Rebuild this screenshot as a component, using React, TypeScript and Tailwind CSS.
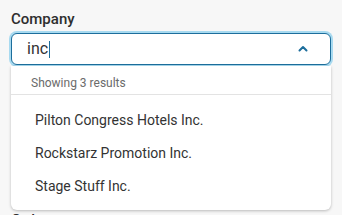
export default function App() {
  const results = ['Pilton Congress Hotels Inc.', 'Rockstarz Promotion Inc.', 'Stage Stuff Inc.']

  return (
    <div
      className="w-[342px] h-[215px] overflow-hidden bg-[#f7f7f7] px-[11px] pt-[9px] text-[#2e2e2e]"
      style={{ fontFamily: 'Roboto, "Noto Sans", sans-serif' }}
    >
      {/* Company field */}
      <label className="block text-[15px] font-medium leading-[20px]">Company</label>
      <div className="relative mt-[4px]">
        <div className="flex h-[32px] items-center rounded-[6px] border border-[#1d6e9c] bg-white pl-[15px] pr-[22px] ring-2 ring-[#a8daf0]">
          <span className="text-[16px] leading-none text-[#333]">inc</span>
          <span className="ml-[1px] h-[17px] w-[1px] bg-[#1d6e9c]" />
          <svg className="ml-auto h-[10px] w-[10px] text-[#1d6e9c]" viewBox="0 0 10 10" fill="none">
            <path d="M1.5 6.5L5 3l3.5 3.5" stroke="currentColor" strokeWidth={2} strokeLinecap="round" strokeLinejoin="round" />
          </svg>
        </div>

        {/* Results dropdown */}
        <div className="absolute left-0 right-0 top-full z-10 mt-[1px] rounded-b-[6px] bg-white shadow-[0_1px_3px_rgba(0,0,0,0.25)]">
          <div className="border-b border-[#e3e3e3] px-[20px] pb-[4px] pt-[10px] text-[12px] leading-[14px] text-[#6b6b6b]">
            Showing 3 results
          </div>
          <ul className="pt-[9px] pb-[7px]">
            {results.map((r) => (
              <li key={r} className="px-[24px] py-[8px] text-[14px] leading-[17px] text-[#333]">
                {r}
              </li>
            ))}
          </ul>
        </div>
      </div>

      {/* Next field, mostly hidden behind the dropdown */}
      <label className="mt-[145px] block text-[15px] font-medium leading-[20px]">Order</label>
    </div>
  )
}
